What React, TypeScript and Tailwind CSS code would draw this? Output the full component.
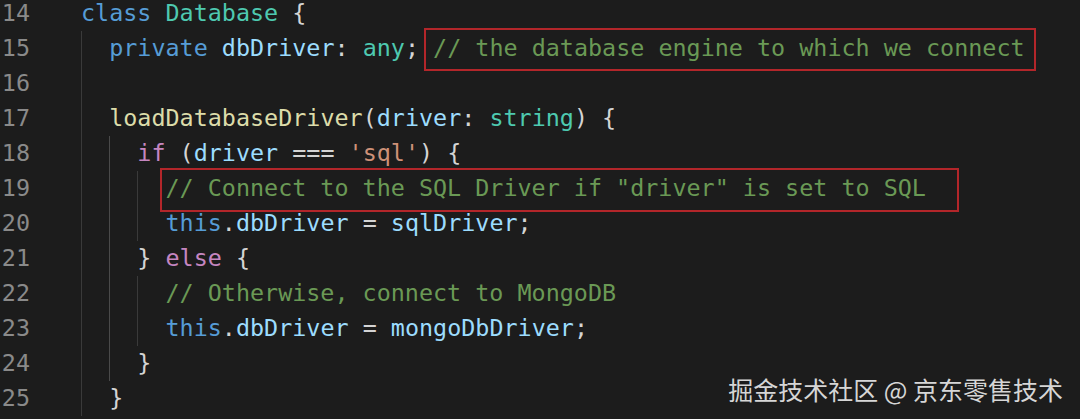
import React from "react";

type Tok = [string, string];

const C = {
  kw: "text-[#569cd6]",
  type: "text-[#4ec9b0]",
  v: "text-[#9cdcfe]",
  fn: "text-[#dcdcaa]",
  ctl: "text-[#c586c0]",
  str: "text-[#ce9178]",
  cm: "text-[#6a9955]",
  p: "text-[#d4d4d4]",
};

type Line = {
  n: number;
  guides: number;
  toks: Tok[];
  box?: { tok: string; cls: string };
};

const lines: Line[] = [
  { n: 14, guides: 0, toks: [[C.kw, "class"], [C.p, " "], [C.type, "Database"], [C.p, " {"]] },
  {
    n: 15,
    guides: 1,
    toks: [[C.kw, "private"], [C.p, " "], [C.v, "dbDriver"], [C.p, ": "], [C.type, "any"], [C.p, "; "]],
    box: {
      tok: "// the database engine to which we connect",
      cls: "-top-[3px] -bottom-[5px] -left-[9px] -right-[11px]",
    },
  },
  { n: 16, guides: 1, toks: [] },
  {
    n: 17,
    guides: 1,
    toks: [[C.fn, "loadDatabaseDriver"], [C.p, "("], [C.v, "driver"], [C.p, ": "], [C.type, "string"], [C.p, ") {"]],
  },
  {
    n: 18,
    guides: 2,
    toks: [[C.ctl, "if"], [C.p, " ("], [C.v, "driver"], [C.p, " === "], [C.str, "'sql'"], [C.p, ") {"]],
  },
  {
    n: 19,
    guides: 3,
    toks: [],
    box: {
      tok: '// Connect to the SQL Driver if "driver" is set to SQL',
      cls: "-top-[3px] -bottom-[6px] -left-[5px] -right-[33px]",
    },
  },
  { n: 20, guides: 3, toks: [[C.kw, "this"], [C.p, "."], [C.v, "dbDriver"], [C.p, " = "], [C.v, "sqlDriver"], [C.p, ";"]] },
  { n: 21, guides: 2, toks: [[C.p, "} "], [C.ctl, "else"], [C.p, " {"]] },
  { n: 22, guides: 3, toks: [[C.cm, "// Otherwise, connect to MongoDB"]] },
  { n: 23, guides: 3, toks: [[C.kw, "this"], [C.p, "."], [C.v, "dbDriver"], [C.p, " = "], [C.v, "mongoDbDriver"], [C.p, ";"]] },
  { n: 24, guides: 2, toks: [[C.p, "}"]] },
  { n: 25, guides: 1, toks: [[C.p, "}"]] },
];

function CodeLine({ line }: { line: Line }) {
  return (
    <div className="flex h-[35px] items-center whitespace-pre">
      <div className="w-[30px] text-right text-[#8a8a8a]">{line.n}</div>
      <div className="ml-[51px] flex h-full items-center">
        {/* indent guides, one per 2-space level */}
        {Array.from({ length: line.guides }).map((_, i) => (
          <span
            key={i}
            className={
              "h-full w-[2ch] border-l " +
              (i === 1 ? "border-[#4a4a4a]" : "border-[#3a3a3a]")
            }
          />
        ))}
        {line.toks.map(([cls, t], i) => (
          <span key={i} className={cls}>
            {t}
          </span>
        ))}
        {line.box && (
          <span className={"relative flex h-full items-center " + C.cm}>
            {line.box.tok}
            <span
              className={
                "pointer-events-none absolute border-2 border-[#b3262a] " + line.box.cls
              }
            />
          </span>
        )}
      </div>
    </div>
  );
}

export default function App() {
  return (
    <div className="relative h-[419px] w-[1080px] overflow-hidden bg-[#1c1c1c]">
      <div className="-mt-[4px] font-['DejaVu_Sans_Mono',monospace] text-[23.4px] leading-none">
        {lines.map((l) => (
          <CodeLine key={l.n} line={l} />
        ))}
      </div>
      <div className="absolute right-[17px] top-[376px] font-['Noto_Sans_CJK_SC',sans-serif] text-[25px] leading-[27px] text-[#d6d6d6]">
        掘金技术社区 @ 京东零售技术
      </div>
    </div>
  );
}
